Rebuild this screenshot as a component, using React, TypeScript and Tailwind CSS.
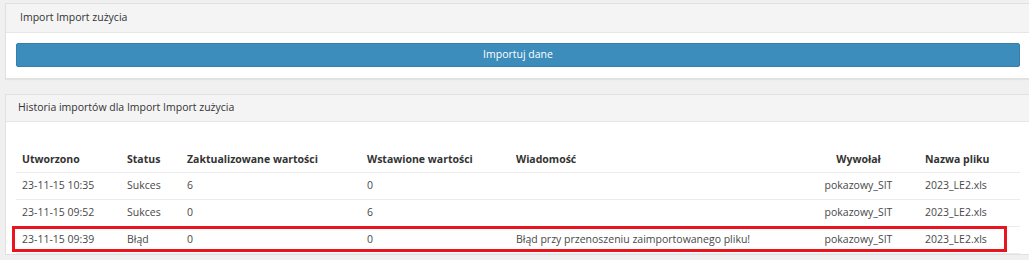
const rows = [
  { created: "23-11-15 10:35", status: "Sukces", updated: "6", inserted: "0", message: "", user: "pokazowy_SIT", file: "2023_LE2.xls" },
  { created: "23-11-15 09:52", status: "Sukces", updated: "0", inserted: "6", message: "", user: "pokazowy_SIT", file: "2023_LE2.xls" },
  { created: "23-11-15 09:39", status: "Błąd", updated: "0", inserted: "0", message: "Błąd przy przenoszeniu zaimportowanego pliku!", user: "pokazowy_SIT", file: "2023_LE2.xls" },
];

export default function App() {
  return (
    <div className="h-[260px] overflow-hidden bg-[#f0f0f0] pl-[5px] pt-[3px] font-['Open_Sans',sans-serif] text-[10.5px] text-[#484848]">
      <div className="w-[1026px] border border-[#e1e1e1] bg-white shadow-[0_1px_1px_rgba(0,0,0,0.05)]">
        <div className="flex h-[29px] items-center border-b border-[#e6e6e6] bg-[#f4f4f4] px-[14px] text-[#333]">
          Import Import zużycia
        </div>
        <div className="px-[10px] pb-[11px] pt-[10px]">
          <button className="h-[24px] w-full rounded-[2px] border border-[#367fa9] bg-[#3c8dbc] text-white">
            Importuj dane
          </button>
        </div>
      </div>

      <div className="mt-[15px] w-[1026px] border border-[#e1e1e1] bg-white">
        <div className="flex h-[27px] items-center border-b border-[#e6e6e6] bg-[#f4f4f4] px-[12px] text-[#333]">
          Historia importów dla Import Import zużycia
        </div>
        <div className="relative px-[10px] pt-[26px]">
          <table className="w-full table-fixed border-collapse">
            <colgroup>
              <col className="w-[105px]" />
              <col className="w-[60px]" />
              <col className="w-[180px]" />
              <col className="w-[149px]" />
              <col className="w-[288px]" />
              <col className="w-[121px]" />
              <col />
            </colgroup>
            <thead>
              <tr className="h-[24px] border-b border-[#ececec] text-left font-bold text-[#333]">
                <th className="px-[6px]">Utworzono</th>
                <th className="px-[6px]">Status</th>
                <th className="px-[6px]">Zaktualizowane wartości</th>
                <th className="px-[6px]">Wstawione wartości</th>
                <th className="px-[6px]">Wiadomość</th>
                <th className="px-[6px] text-center">Wywołał</th>
                <th className="px-[6px]">Nazwa pliku</th>
              </tr>
            </thead>
            <tbody>
              {rows.map((r) => (
                <tr key={r.created} className="h-[27px] border-b border-[#ececec]">
                  <td className="px-[6px]">{r.created}</td>
                  <td className="px-[6px]">{r.status}</td>
                  <td className="px-[6px]">{r.updated}</td>
                  <td className="px-[6px]">{r.inserted}</td>
                  <td className="px-[6px]">{r.message}</td>
                  <td className="px-[6px] text-center">{r.user}</td>
                  <td className="px-[6px]">{r.file}</td>
                </tr>
              ))}
            </tbody>
          </table>
          <div className="absolute left-[6px] top-[104px] h-[26px] w-[995px] border-[3px] border-[#e8141e]" />
        </div>
      </div>
    </div>
  );
}
